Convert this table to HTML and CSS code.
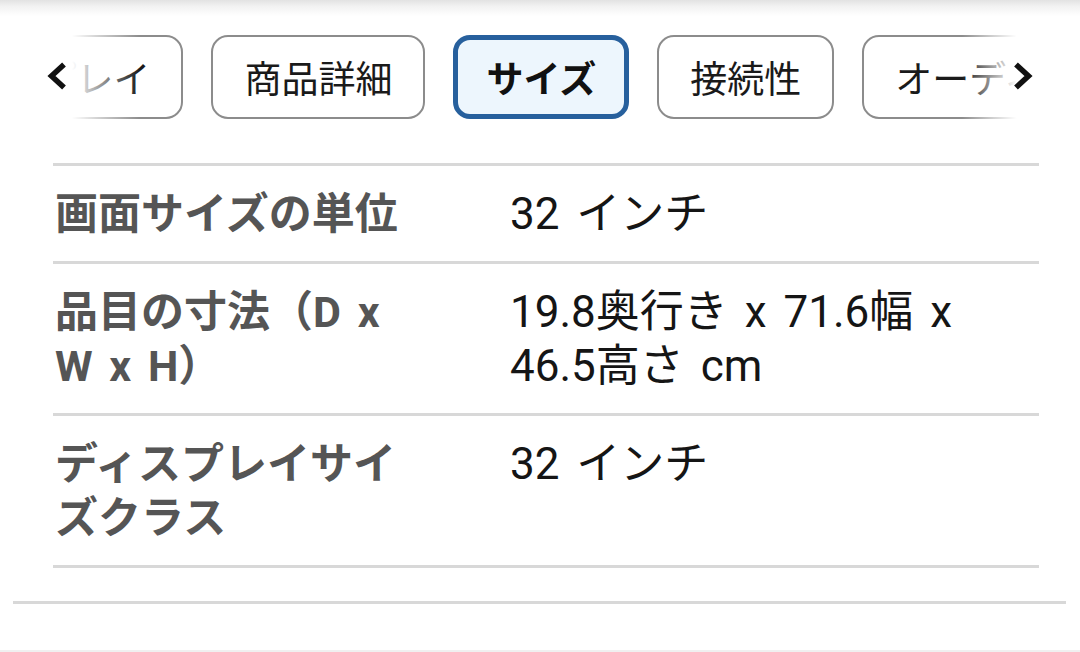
FILE: index.html
```html
<!DOCTYPE html>
<html lang="ja">
<head>
<meta charset="utf-8">
<title>サイズ</title>
<link rel="stylesheet" href="styles.css">
</head>
<body>
<div class="page">
  <div class="top-shadow"></div>
  <div class="tabs-wrap">
    <div class="tabs">
      <div class="tab">ディスプレイ</div>
      <div class="tab">商品詳細</div>
      <div class="tab tab-active">サイズ</div>
      <div class="tab">接続性</div>
      <div class="tab">オーディオ</div>
    </div>
    <div class="fade fade-left">
      <svg class="chev" width="20" height="28" viewBox="0 0 20 28"><path d="M17 2.5 L4.5 14 L17 25.5" fill="none" stroke="#111" stroke-width="5.5" stroke-linejoin="miter"/></svg>
    </div>
    <div class="fade fade-right">
      <svg class="chev" width="20" height="28" viewBox="0 0 20 28"><path d="M3 2.5 L15.5 14 L3 25.5" fill="none" stroke="#111" stroke-width="5.5" stroke-linejoin="miter"/></svg>
    </div>
  </div>

  <div class="spec">
    <div class="row">
      <div class="label">画面サイズの単位</div>
      <div class="value">32 インチ</div>
    </div>
    <div class="row">
      <div class="label">品目の寸法（D x W x H）</div>
      <div class="value">19.8奥行き x 71.6幅 x 46.5高さ cm</div>
    </div>
    <div class="row">
      <div class="label">ディスプレイサイズクラス</div>
      <div class="value">32 インチ</div>
    </div>
  </div>

  <div class="divider"></div>
  <div class="bottom-edge"></div>
</div>
</body>
</html>
```

FILE: styles.css
```css
* { box-sizing: border-box; }

html, body {
  margin: 0;
  padding: 0;
  background: #ffffff;
}

body {
  width: 1080px;
  height: 652px;
  overflow: hidden;
  font-family: Roboto, "Noto Sans CJK JP", sans-serif;
  color: #111;
}

.page {
  position: relative;
  height: 652px;
  display: flex;
  flex-direction: column;
}

.top-shadow {
  height: 16px;
  background: linear-gradient(to bottom, #e2e2e2 0%, #f2f2f2 40%, #ffffff 100%);
  flex: none;
}

.tabs-wrap {
  position: relative;
  margin: 18px 40px 0 40px;
  height: 86px;
  overflow: hidden;
  flex: none;
}

.tabs {
  display: flex;
  gap: 28px;
  margin-left: -142px;
  padding-top: 1px;
}

.tab {
  flex: none;
  height: 84px;
  padding: 0 31px;
  border: 2px solid #8c8c8c;
  border-radius: 17px;
  background: #fff;
  display: flex;
  align-items: center;
  font-family: "Noto Sans CJK JP", sans-serif;
  font-size: 37px;
  line-height: 1;
  color: #1a1a1a;
  white-space: nowrap;
}

.tab-active {
  border: 5px solid #27609d;
  background: #edf6fd;
  padding: 0 28px;
  font-weight: 700;
  color: #111;
}

.fade {
  position: absolute;
  top: 0;
  bottom: 0;
  display: flex;
  align-items: center;
}

.fade-left {
  left: 0;
  width: 100px;
  background: linear-gradient(to right, #fff 0%, #fff 32%, rgba(255,255,255,0.6) 58%, rgba(255,255,255,0) 100%);
  padding-left: 7px;
}

.fade-right {
  right: 0;
  width: 78px;
  justify-content: flex-end;
  background: linear-gradient(to left, #fff 0%, #fff 30%, rgba(255,255,255,0.6) 60%, rgba(255,255,255,0) 100%);
  padding-right: 7px;
}

.chev {
  display: block;
  margin-top: -2px;
}

.spec {
  margin: 43px 41px 0 53px;
  border-top: 3px solid #d8d8d8;
  flex: none;
}

.row {
  display: grid;
  grid-template-columns: 370px 1fr;
  column-gap: 85px;
  padding: 21px 0 20px 2px;
  border-bottom: 3px solid #d8d8d8;
  line-height: 54px;
  word-spacing: 6px;
}

.label {
  font-family: Roboto, "Noto Sans CJK JP", sans-serif;
  font-size: 43px;
  font-weight: 700;
  color: #555;
}

.value {
  font-family: Roboto, "Noto Sans CJK JP", sans-serif;
  font-size: 44px;
  font-weight: 400;
  color: #151515;
  padding-right: 50px;
}

.divider {
  margin: 33px 14px 0 13px;
  height: 3px;
  background: #d8d8d8;
  flex: none;
}

.bottom-edge {
  position: absolute;
  left: 0;
  right: 0;
  bottom: 0;
  height: 2px;
  background: #f0f0f0;
}
```
